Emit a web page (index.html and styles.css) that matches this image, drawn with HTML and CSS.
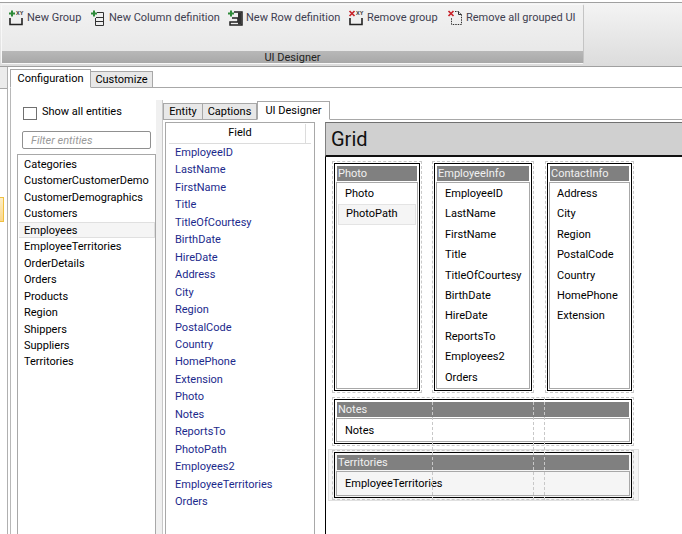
FILE: index.html
```html
<!DOCTYPE html>
<html lang="en">
<head>
    <meta charset="UTF-8">
    <title>UI Designer</title>
    <link rel="stylesheet" href="styles.css">
</head>
<body>
    <header class="ribbon">
        <div class="ribbon-group">
            <div class="tools">
                <div class="tool tool-group">
                    <svg class="icon" viewBox="0 0 16 16"><path d="M3 0.500h2v2h2v2h-2v2h-2v-2h-2v-2h2z" fill="#2e8b3a"/><text x="8" y="5" class="xy">XY</text><path d="M2 8v6.500h12V8" fill="none" stroke="#222" stroke-width="1.600"/></svg>
                    <span>New Group</span>
                </div>
                <div class="tool tool-column">
                    <svg class="icon" viewBox="0 0 16 16"><path d="M3 0.500h2v2h2v2h-2v2h-2v-2h-2v-2h2z" fill="#2e8b3a"/><path d="M7 2.500h6.500v13H5.500V8M6 7.500h7.500M6 11.500h7.500" fill="none" stroke="#333" stroke-width="1"/></svg>
                    <span>New Column definition</span>
                </div>
                <div class="tool tool-row">
                    <svg class="icon" viewBox="0 0 16 16"><path d="M3 0.500h2v2h2v2h-2v2h-2v-2h-2v-2h2z" fill="#2e8b3a"/><path d="M7 2h8v13H3v-3h8V8H5" fill="none" stroke="#222" stroke-width="1.500"/><path d="M11 2.500h3.500v12H11z" fill="#333"/></svg>
                    <span>New Row definition</span>
                </div>
                <div class="tool tool-remove">
                    <svg class="icon" viewBox="0 0 16 16"><path d="M1.500 1l5 5M6.500 1l-5 5" stroke="#c8242b" stroke-width="1.700"/><text x="8" y="5" class="xy">XY</text><path d="M2 8v6.500h12V8" fill="none" stroke="#222" stroke-width="1.600"/></svg>
                    <span>Remove group</span>
                </div>
                <div class="tool">
                    <svg class="icon" viewBox="0 0 16 16"><path d="M1.500 1l5 5M6.500 1l-5 5" stroke="#c8242b" stroke-width="1.700"/><path d="M8 1.500h3.500l3 3v10h-10V8" fill="none" stroke="#333" stroke-dasharray="1.500 1"/><path d="M11.500 1.500v3h3" fill="none" stroke="#333"/></svg>
                    <span>Remove all grouped UI</span>
                </div>
            </div>
            <div class="group-caption">UI Designer</div>
        </div>
    </header>

    <div class="main">
        <aside class="side">
            <div class="side-top"></div>
            <div class="side-selected"></div>
        </aside>

        <section class="config">
            <nav class="tabs outer-tabs">
                <div class="tab active">Configuration</div>
                <div class="tab">Customize</div>
            </nav>

            <div class="config-body">
                <div class="entities">
                    <label class="show-all"><span class="checkbox"></span><span class="show-text">Show all entities</span></label>
                    <div class="filter">Filter entities</div>
                    <ul class="entity-list">
                        <li>Categories</li>
                        <li>CustomerCustomerDemo</li>
                        <li>CustomerDemographics</li>
                        <li>Customers</li>
                        <li class="current">Employees</li>
                        <li>EmployeeTerritories</li>
                        <li>OrderDetails</li>
                        <li>Orders</li>
                        <li>Products</li>
                        <li>Region</li>
                        <li>Shippers</li>
                        <li>Suppliers</li>
                        <li>Territories</li>
                    </ul>
                </div>

                <div class="splitter"></div>

                <div class="designer">
                    <nav class="tabs inner-tabs">
                        <div class="tab tab-entity">Entity</div>
                        <div class="tab tab-captions">Captions</div>
                        <div class="tab active tab-designer">UI Designer</div>
                    </nav>

                    <div class="designer-body">
                        <div class="fields">
                            <div class="fields-head"><span>Field</span></div>
                            <ul class="field-list">
                                <li>EmployeeID</li>
                                <li>LastName</li>
                                <li>FirstName</li>
                                <li>Title</li>
                                <li>TitleOfCourtesy</li>
                                <li>BirthDate</li>
                                <li>HireDate</li>
                                <li>Address</li>
                                <li>City</li>
                                <li>Region</li>
                                <li>PostalCode</li>
                                <li>Country</li>
                                <li>HomePhone</li>
                                <li>Extension</li>
                                <li>Photo</li>
                                <li>Notes</li>
                                <li>ReportsTo</li>
                                <li>PhotoPath</li>
                                <li>Employees2</li>
                                <li>EmployeeTerritories</li>
                                <li>Orders</li>
                            </ul>
                        </div>

                        <div class="grid-panel">
                            <div class="grid-title">Grid</div>
                            <div class="canvas">
                                <div class="columns">
                                    <div class="cell cell-photo">
                                        <div class="group">
                                            <div class="group-head">Photo</div>
                                            <ul class="group-list">
                                                <li>Photo</li>
                                                <li class="current">PhotoPath</li>
                                            </ul>
                                        </div>
                                    </div>
                                    <div class="cell cell-employee">
                                        <div class="group">
                                            <div class="group-head">EmployeeInfo</div>
                                            <ul class="group-list">
                                                <li>EmployeeID</li>
                                                <li>LastName</li>
                                                <li>FirstName</li>
                                                <li>Title</li>
                                                <li>TitleOfCourtesy</li>
                                                <li>BirthDate</li>
                                                <li>HireDate</li>
                                                <li>ReportsTo</li>
                                                <li>Employees2</li>
                                                <li>Orders</li>
                                            </ul>
                                        </div>
                                    </div>
                                    <div class="cell cell-contact">
                                        <div class="group">
                                            <div class="group-head">ContactInfo</div>
                                            <ul class="group-list">
                                                <li>Address</li>
                                                <li>City</li>
                                                <li>Region</li>
                                                <li>PostalCode</li>
                                                <li>Country</li>
                                                <li>HomePhone</li>
                                                <li>Extension</li>
                                            </ul>
                                        </div>
                                    </div>
                                </div>

                                <div class="cell cell-wide">
                                    <div class="group">
                                        <div class="group-head">Notes</div>
                                        <ul class="group-list">
                                            <li>Notes</li>
                                        </ul>
                                    </div>
                                </div>

                                <div class="row-selected">
                                    <div class="cell cell-wide cell-last">
                                        <div class="group">
                                            <div class="group-head">Territories</div>
                                            <ul class="group-list">
                                                <li>EmployeeTerritories</li>
                                            </ul>
                                        </div>
                                    </div>
                                </div>

                                <div class="guide guide-1"></div>
                                <div class="guide guide-2"></div>
                                <div class="guide guide-3"></div>
                            </div>
                        </div>
                    </div>
                </div>
            </div>
        </section>
    </div>
</body>
</html>
```

FILE: styles.css
```css
html, body {
    height: 534px;
    overflow: hidden;
}
body {
    font-family: Roboto, "Liberation Sans", sans-serif;
    font-size: 11px;
    color: #000;
    margin: 0;
    padding: 0;
    background-color: white;
}
ul {
    list-style: none;
    margin: 0;
    padding: 0;
}

/* ribbon */
.ribbon {
    box-sizing: border-box;
    height: 65px;
    margin-top: 2px;
    padding: 1px 0 2px 1px;
    border-top: 1px solid #a0a0a0;
    border-bottom: 1px solid #a0a0a0;
    background: linear-gradient(#f4f4f4, #dcdcdc);
}
.ribbon-group {
    box-sizing: border-box;
    width: 583px;
    height: 60px;
    display: flex;
    flex-direction: column;
    background: linear-gradient(#f2f2f2, #e6e6e6);
    border: 1px solid #f8f8f8;
    border-right-color: #c4c4c4;
    border-radius: 2px;
}
.tools {
    flex: 1;
    display: flex;
    padding: 5px 0 0 6px;
    color: #404050;
}
.tool {
    display: flex;
    align-items: flex-start;
    gap: 3px;
    line-height: 15px;
    white-space: nowrap;
}
.tool-group { width: 82px; }
.tool-column { width: 137px; }
.tool-row { width: 121px; }
.tool-remove { width: 99px; }
.icon {
    width: 16px;
    height: 16px;
    flex: none;
}
.xy {
    font-family: "Liberation Sans", sans-serif;
    font-size: 5.5px;
    font-weight: bold;
    fill: #333;
}
.group-caption {
    height: 12px;
    line-height: 14px;
    text-align: center;
    color: #222;
    background: linear-gradient(#b8b8b8, #a8a8a8);
}

/* main area */
.main {
    display: flex;
    height: 467px;
}
.side {
    box-sizing: border-box;
    width: 8px;
    flex: none;
    border-right: 1px solid #b0b0b0;
    display: flex;
    flex-direction: column;
}
.side-top {
    height: 21px;
    background-color: #ececec;
    border-bottom: 1px solid #a8a8a8;
}
.side-selected {
    width: 4px;
    height: 25px;
    margin-top: 108px;
    background: linear-gradient(#fdeec8, #fbd78c);
    border: 1px solid #f0c040;
    border-left: none;
    box-sizing: border-box;
}
.config {
    flex: 1;
    min-width: 0;
    padding-left: 2px;
    display: flex;
    flex-direction: column;
}

/* tabs */
.tabs {
    display: flex;
    align-items: flex-end;
    flex: none;
    box-sizing: border-box;
    border-bottom: 1px solid #a8a8a8;
}
.outer-tabs {
    height: 21px;
}
.inner-tabs {
    height: 20px;
}
.tab {
    box-sizing: border-box;
    height: 17px;
    line-height: 15px;
    text-align: center;
    background-color: #e8e8e8;
    border: 1px solid #a8a8a8;
    border-left: none;
    margin-bottom: -1px;
}
.tab.active {
    height: 19px;
    line-height: 17px;
    background-color: white;
    border-bottom: 1px solid white;
    border-left: 1px solid #a8a8a8;
}
.outer-tabs .tab { width: 62px; }
.outer-tabs .tab.active { width: 81px; }
.tab-entity {
    width: 40px;
    border-left: 1px solid #a8a8a8;
}
.tab-captions { width: 54px; }
.tab-designer { width: 73px; }

.config-body {
    flex: 1;
    display: flex;
    min-height: 0;
    border-left: 1px solid #b8b8b8;
}

/* entities */
.entities {
    box-sizing: border-box;
    width: 145px;
    flex: none;
    padding: 19px 0 0 6px;
    display: flex;
    flex-direction: column;
}
.show-all {
    display: flex;
    align-items: center;
    gap: 5px;
    height: 13px;
    margin-left: 6px;
}
.show-text {
    margin-bottom: 4px;
}
.checkbox {
    box-sizing: border-box;
    width: 14px;
    height: 13px;
    border: 1px solid #707070;
    background-color: white;
}
.filter {
    box-sizing: border-box;
    width: 129px;
    height: 18px;
    margin: 11px 0 5px 5px;
    padding-left: 8px;
    line-height: 17px;
    font-style: italic;
    color: #999;
    border: 1px solid #909090;
    border-radius: 2px;
}
.entity-list {
    flex: 1;
    box-sizing: border-box;
    width: 139px;
    padding-top: 1px;
    border: 1px solid #a8a8a8;
    margin-bottom: -4px;
}
.entity-list li {
    box-sizing: border-box;
    height: 16.46px;
    line-height: 16px;
    padding-left: 6px;
    border: 1px solid transparent;
    border-left: none;
}
.entity-list li.current {
    margin-left: 1px;
    padding-left: 5px;
    background-color: #f5f5f5;
    border: 1px solid #e0e0e0;
    border-left-width: 0;
}

.splitter {
    width: 6px;
    flex: none;
    margin-top: 12px;
    background-color: #f0f0f0;
}

/* designer */
.designer {
    flex: 1;
    min-width: 0;
    margin-top: 12px;
    display: flex;
    flex-direction: column;
    border-left: 1px solid #c8c8c8;
}
.designer-body {
    flex: 1;
    min-height: 0;
    display: flex;
    padding: 2px 0 0 2px;
    gap: 10px;
}
.fields {
    box-sizing: border-box;
    width: 150px;
    flex: none;
    padding-top: 1px;
    border: 1px solid #a8a8a8;
    margin-bottom: -4px;
}
.fields-head {
    box-sizing: border-box;
    height: 20px;
    margin: 0 3px;
    line-height: 17px;
    text-align: center;
    border-bottom: 1px solid #dcdcdc;
    background: linear-gradient(90deg, white 136px, #dcdcdc 136px, #dcdcdc 137px, white 137px);
}
.field-list li {
    height: 17.46px;
    line-height: 17px;
    padding-left: 9px;
    color: #1c2a8c;
}

/* grid canvas */
.grid-panel {
    flex: 1;
    min-width: 0;
    display: flex;
    flex-direction: column;
}
.grid-title {
    box-sizing: border-box;
    height: 35px;
    flex: none;
    padding-left: 5px;
    line-height: 33px;
    font-size: 20px;
    color: #111;
    background-color: #d0d0d0;
    border-top: 1px solid #707070;
    border-left: 1px solid #808080;
    border-bottom: 2px solid #111;
}
.canvas {
    position: relative;
    flex: 1;
    padding: 4px 0 0 6px;
    border-left: 1px solid black;
}
.columns {
    display: flex;
    gap: 10px;
    height: 232px;
}
.cell {
    box-sizing: border-box;
    padding: 1px;
    border: 1px dashed #c8c8c8;
    display: flex;
}
.cell-photo { width: 90px; }
.cell-employee { width: 102px; }
.cell-contact {
    width: 89px;
    margin-left: 1px;
}
.cell-wide {
    width: 302px;
    height: 49px;
    margin-top: 4px;
}
.cell-last {
    margin-top: 0;
    height: 50px;
}
.row-selected {
    box-sizing: border-box;
    width: 311px;
    height: 52px;
    margin: 3px 0 0 -4px;
    padding: 0 0 0 3px;
    background-color: #f5f5f5;
    border: 1px solid #e0e0e0;
}
.group {
    flex: 1;
    min-width: 0;
    box-sizing: border-box;
    padding: 2px 1px 1px;
    border: 1px solid black;
    background-color: white;
    display: flex;
    flex-direction: column;
}
.group-head {
    flex: none;
    height: 15px;
    margin: 0 1px 1px;
    padding-left: 1px;
    line-height: 15px;
    color: #f0f0f0;
    background-color: #808080;
}
.group-list {
    flex: 1;
    padding-top: 1px;
    border: 1px solid #a8a8a8;
}
.cell-wide .group-list {
    padding-top: 2px;
}
.group-list li {
    box-sizing: border-box;
    height: 20.4px;
    line-height: 20px;
    padding-left: 8px;
}
.cell-contact .group-list li {
    padding-left: 7px;
}
.group-list li.current {
    margin: 0 1px;
    padding-left: 7px;
    background-color: #f5f5f5;
    border: 1px solid #e4e4e4;
    line-height: 18px;
}
.row-selected .group {
    background-color: #f5f5f5;
}
.guide {
    position: absolute;
    top: 240px;
    height: 103px;
    border-left: 1px dashed #c8c8c8;
}
.guide-1 { left: 106px; }
.guide-2 { left: 207px; }
.guide-3 { left: 218px; }
```
